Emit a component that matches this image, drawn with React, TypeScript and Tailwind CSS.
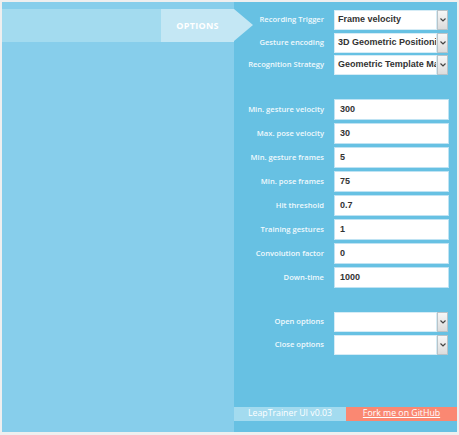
import React from "react";

const labelCls =
  "w-[90px] shrink-0 text-right text-[7.6px] font-semibold leading-none text-[#f0f9fd] [font-family:'Open_Sans',sans-serif]";

function Chevron() {
  return (
    <div className="w-[11px] shrink-0 h-full flex items-center justify-center border border-[#b9c3c8] bg-gradient-to-b from-[#f7f7f7] to-[#dcdcdc]">
      <svg width="6" height="4" viewBox="0 0 6 4">
        <path d="M0.5 0.5 L3 3 L5.5 0.5" fill="none" stroke="#444" strokeWidth="1.2" />
      </svg>
    </div>
  );
}

function SelectRow({ label, value }: { label: string; value: string }) {
  return (
    <div className="flex items-center h-[20px]">
      <div className={labelCls}>{label}</div>
      <div className="ml-[10px] w-[114px] h-full flex">
        <div className="flex-1 min-w-0 h-full bg-white border border-[#d5ecf6] flex items-center pl-[3px] overflow-hidden whitespace-nowrap text-[9px] font-bold text-[#333] [font-family:'Liberation_Sans',Arial,sans-serif]">
          {value}
        </div>
        <Chevron />
      </div>
    </div>
  );
}

function InputRow({ label, value }: { label: string; value: string }) {
  return (
    <div className="flex items-center h-[21px]">
      <div className={labelCls}>{label}</div>
      <div className="ml-[10px] w-[115px] h-full bg-white border border-[#bfe3f3] flex items-center pl-[5px] text-[9px] font-bold text-[#333] [font-family:'Liberation_Sans',Arial,sans-serif]">
        {value}
      </div>
    </div>
  );
}

export default function App() {
  const fields: [string, string][] = [
    ["Min. gesture velocity", "300"],
    ["Max. pose velocity", "30"],
    ["Min. gesture frames", "5"],
    ["Min. pose frames", "75"],
    ["Hit threshold", "0.7"],
    ["Training gestures", "1"],
    ["Convolution factor", "0"],
    ["Down-time", "1000"],
  ];
  return (
    <div className="w-[459px] h-[435px] bg-[#efefef] pt-[2px] pl-[2px] pr-[2px] pb-[3px]">
      <div className="flex h-full">
        <div className="relative z-10 w-[232px] h-full bg-[#87ceeb]">
          <div className="mt-[7px] h-[33px] flex">
            <div className="w-[159px] h-full bg-[#a3dbef]" />
            <div className="relative w-[73px] h-full bg-[#c4e7f4] flex items-center justify-center">
              <span className="text-[9px] font-bold text-white tracking-[0.3px] [font-family:'Open_Sans',sans-serif]">
                OPTIONS
              </span>
              <div className="absolute left-full top-0 w-0 h-0 border-l-[19px] border-l-[#c4e7f4] border-y-[16.5px] border-y-transparent" />
            </div>
          </div>
        </div>
        <div className="flex-1 h-full bg-[#67c1e3] flex flex-col pt-[8px]">
          <div className="flex flex-col gap-[2.5px]">
            <SelectRow label="Recording Trigger" value="Frame velocity" />
            <SelectRow label="Gesture encoding" value="3D Geometric Positioning" />
            <SelectRow label="Recognition Strategy" value="Geometric Template Matching" />
          </div>
          <div className="mt-[24px] flex flex-col gap-[3px]">
            {fields.map(([l, v]) => (
              <InputRow key={l} label={l} value={v} />
            ))}
          </div>
          <div className="mt-[24px] flex flex-col gap-[3px]">
            <SelectRow label="Open options" value="" />
            <SelectRow label="Close options" value="" />
          </div>
          <div className="mt-[52px] h-[14px] flex text-[8.75px] text-white [font-family:'Open_Sans',sans-serif]">
            <div className="w-[112px] h-full bg-[#a3dbef] flex items-center justify-center">
              LeapTrainer UI v0.03
            </div>
            <div className="flex-1 h-full bg-[#fa8872] flex items-center justify-center underline">
              Fork me on GitHub
            </div>
          </div>
        </div>
      </div>
    </div>
  );
}
